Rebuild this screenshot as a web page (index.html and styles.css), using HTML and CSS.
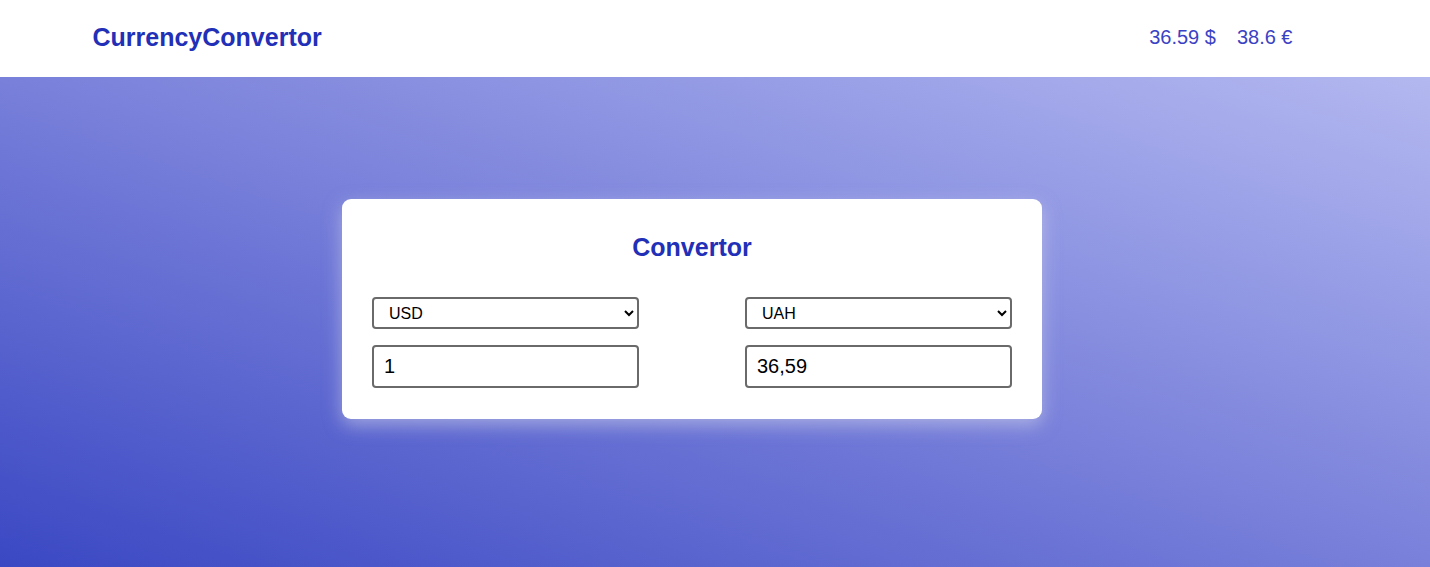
FILE: index.html
```html
<!DOCTYPE html>
<html lang="en">
<head>
<meta charset="utf-8">
<title>CurrencyConvertor</title>
<link rel="stylesheet" href="styles.css">
</head>
<body>
<header class="header">
  <div class="container header-inner">
    <div class="logo">CurrencyConvertor</div>
    <div class="rates">
      <span class="rate">36.59 $</span>
      <span class="rate">38.6 €</span>
    </div>
  </div>
</header>
<main class="main">
  <section class="card">
    <h2 class="card-title">Convertor</h2>
    <div class="columns">
      <div class="column">
        <select class="select">
          <option>USD</option>
          <option>EUR</option>
          <option>UAH</option>
        </select>
        <input class="amount" type="text" value="1">
      </div>
      <div class="column">
        <select class="select">
          <option>UAH</option>
          <option>USD</option>
          <option>EUR</option>
        </select>
        <input class="amount" type="text" value="36,59">
      </div>
    </div>
  </section>
</main>
</body>
</html>
```
FILE: styles.css
```css
* { box-sizing: border-box; }
html, body { height: 100%; }
body {
  margin: 0;
  font-family: "Liberation Sans", Arial, sans-serif;
  display: flex;
  flex-direction: column;
  background: #fff;
}
.header {
  height: 77px;
  background: #fff;
  padding-right: 45px;
  flex: none;
}
.container {
  width: 1200px;
  margin: 0 auto;
}
.header-inner {
  height: 100%;
  display: flex;
  align-items: center;
  justify-content: space-between;
}
.logo {
  font-size: 25px;
  font-weight: bold;
  color: #2230b8;
  padding-bottom: 2px;
}
.rates {
  display: flex;
  gap: 21px;
  font-size: 20px;
  color: #3a42c4;
  padding-bottom: 2px;
}
.main {
  flex: 1;
  background: linear-gradient(to top right, #3a48c3 0%, #7880da 50%, #b3b8f0 100%);
  padding: 122px 46px 0 0;
}
.card {
  width: 700px;
  margin: 0 auto;
  background: #fff;
  border-radius: 9px;
  padding: 30px 30px 31px;
  box-shadow: 0 6px 18px rgba(215, 215, 235, 0.55);
}
.card-title {
  margin: 0 0 32px;
  font-size: 25px;
  line-height: 36px;
  font-weight: bold;
  text-align: center;
  color: #2230b8;
}
.columns {
  display: flex;
  justify-content: space-between;
}
.column {
  width: 267px;
  display: flex;
  flex-direction: column;
  gap: 16px;
}
.select {
  height: 32px;
  border: 2px solid #6a6a6a;
  border-radius: 4px;
  background: #fff;
  font-family: "Liberation Sans", Arial, sans-serif;
  font-size: 16px;
  color: #000;
  padding: 0 8px 0 11px;
}
.amount {
  height: 43px;
  border: 2px solid #6a6a6a;
  border-radius: 4px;
  font-family: "Liberation Sans", Arial, sans-serif;
  font-size: 20px;
  color: #000;
  padding: 0 10px;
  outline: none;
}
```
